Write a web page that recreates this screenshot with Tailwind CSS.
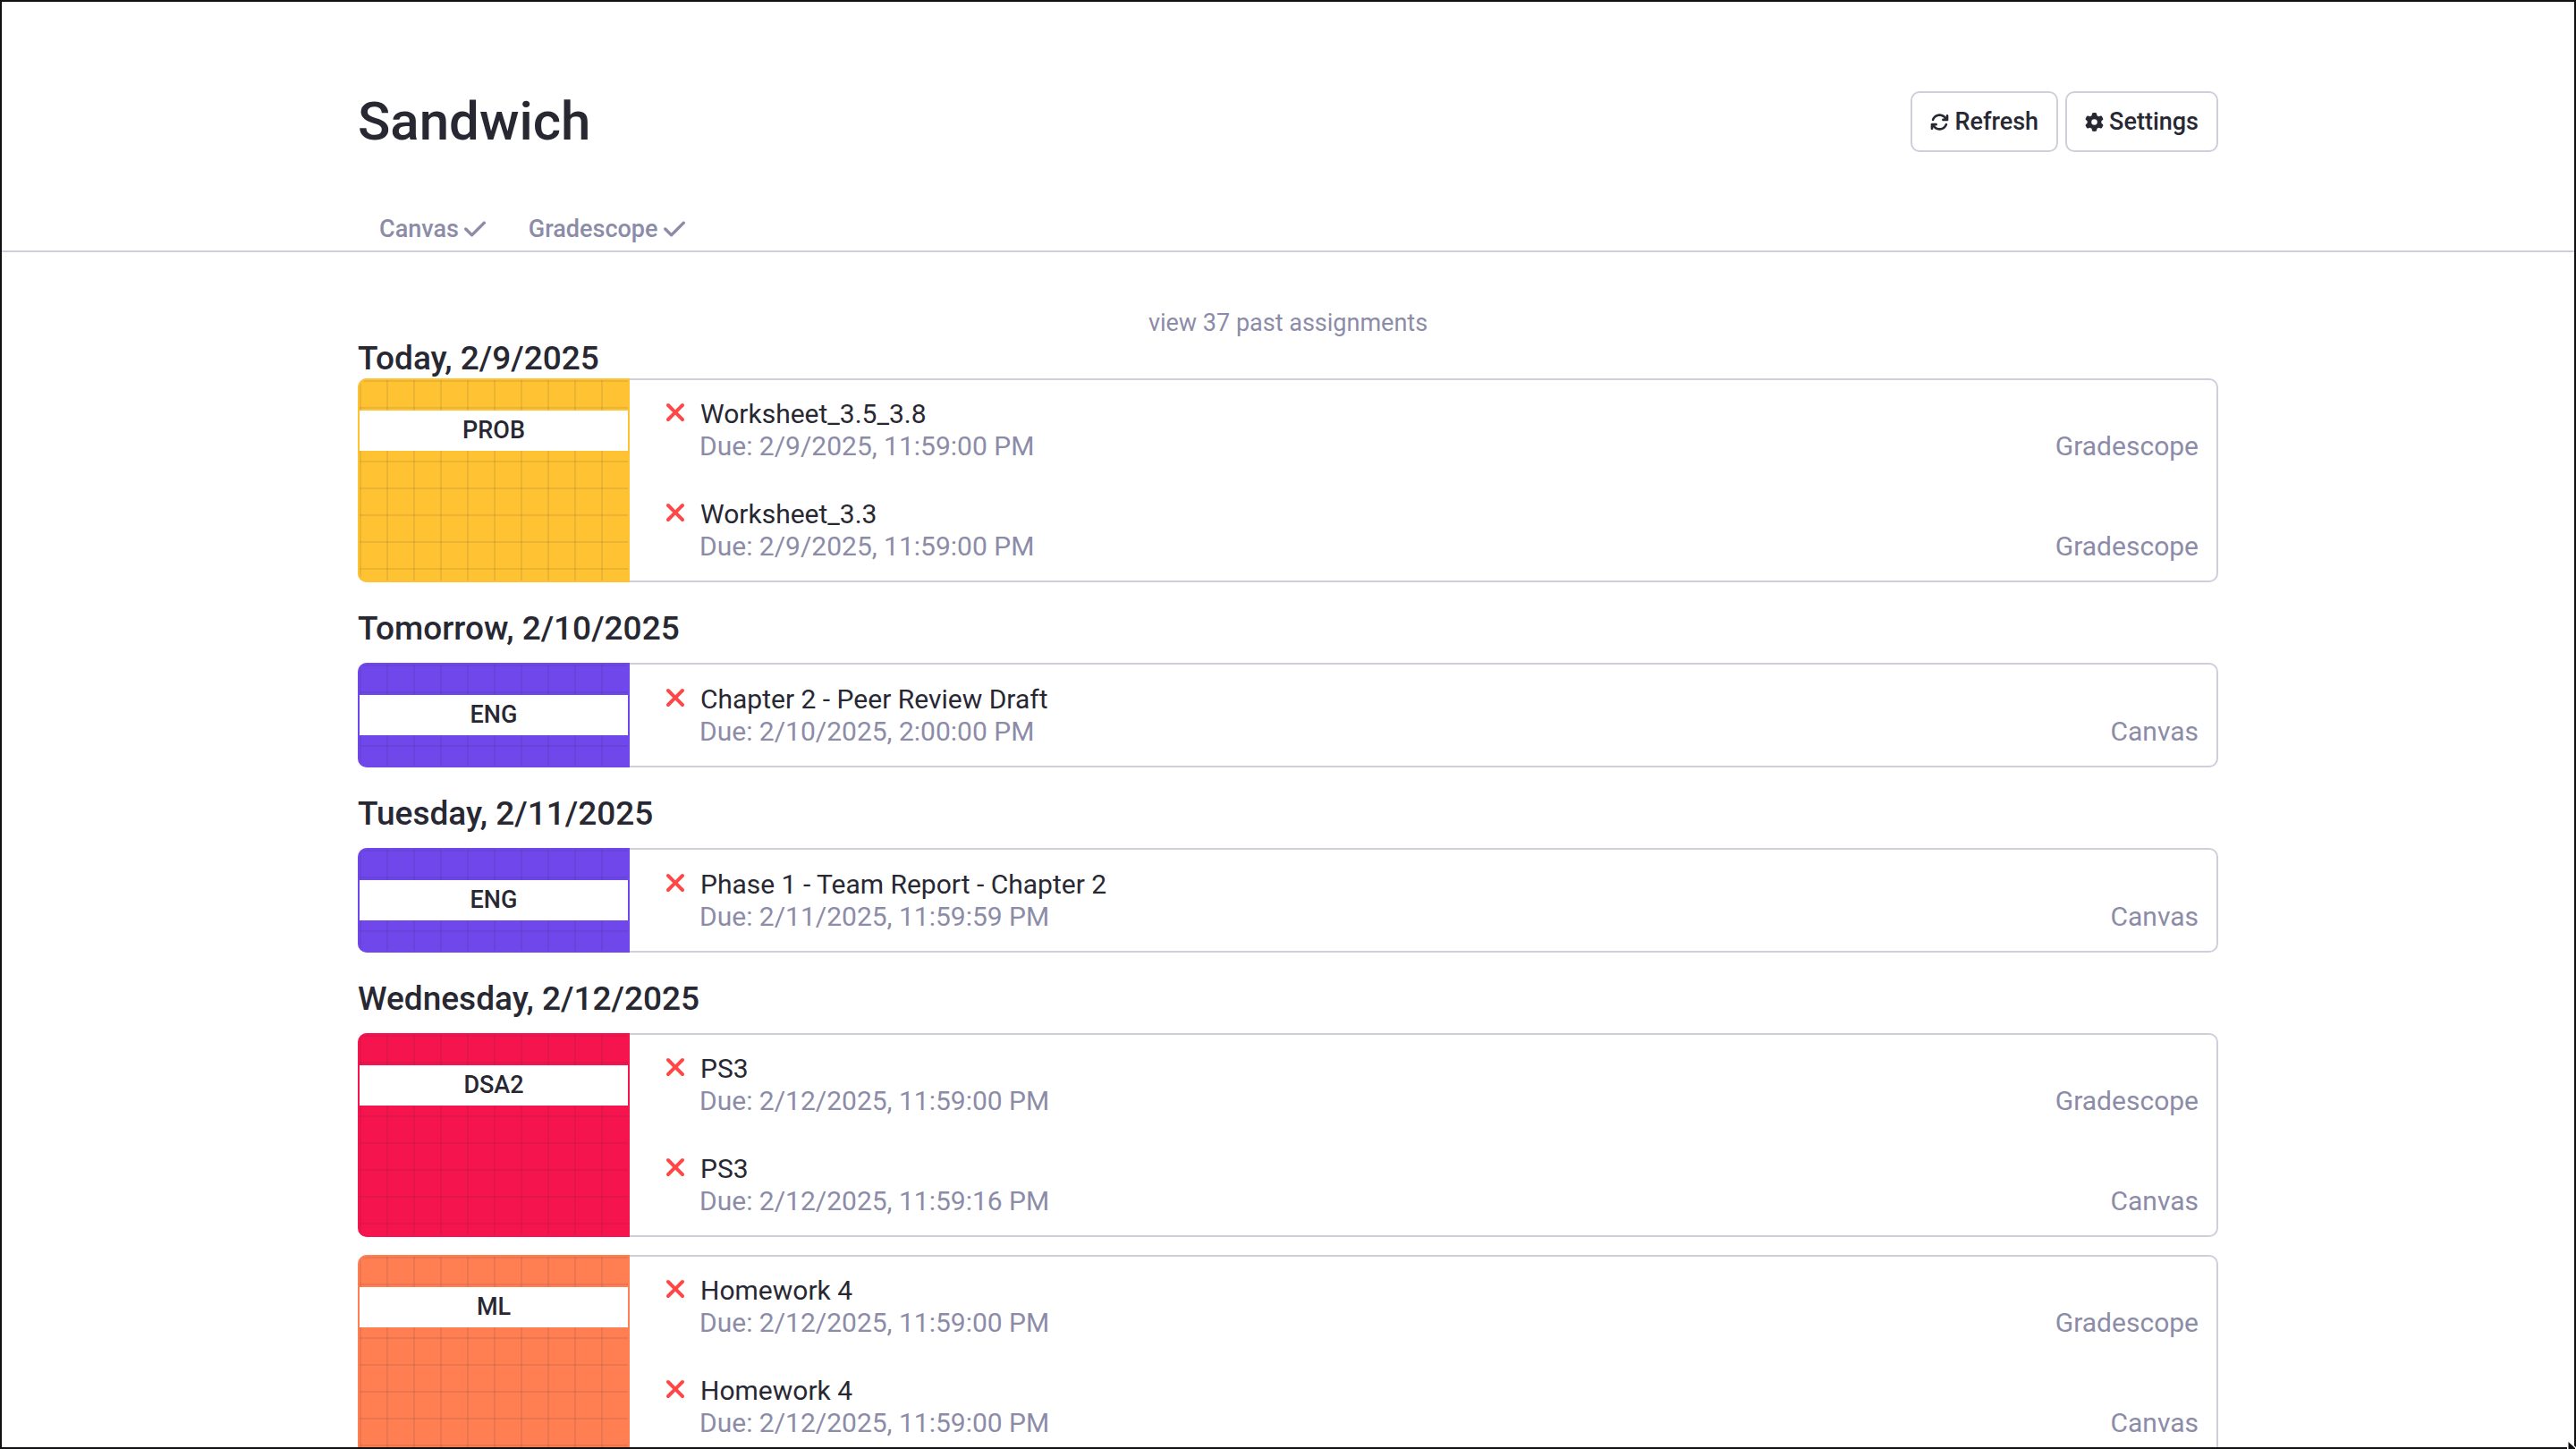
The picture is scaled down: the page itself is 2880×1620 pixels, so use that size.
<!DOCTYPE html>
<html lang="en">
<head>
<meta charset="utf-8">
<title>Sandwich</title>
<script src="https://cdn.jsdelivr.net/npm/@tailwindcss/browser@4"></script>
</head>
<body class="bg-white font-['Roboto',sans-serif] text-[#282833]">
<svg class="hidden" aria-hidden="true">
  <symbol id="x" viewBox="0 0 384 512"><path d="M342.6 150.6c12.5-12.5 12.5-32.8 0-45.3s-32.8-12.5-45.3 0L192 210.7 86.6 105.4c-12.5-12.5-32.8-12.5-45.3 0s-12.5 32.8 0 45.3L146.7 256 41.4 361.4c-12.5 12.5-12.5 32.8 0 45.3s32.8 12.5 45.3 0L192 301.3 297.4 406.6c12.5 12.5 32.8 12.5 45.3 0s12.5-32.8 0-45.3L237.3 256 342.6 150.6z"/></symbol>
  <symbol id="check" viewBox="0 0 448 512"><path d="M438.6 105.4c12.5 12.5 12.5 32.8 0 45.3l-256 256c-12.5 12.5-32.8 12.5-45.3 0l-128-128c-12.5-12.5-12.5-32.8 0-45.3s32.8-12.5 45.3 0L160 338.7 393.4 105.4c12.5-12.5 32.8-12.5 45.3 0z"/></symbol>
  <symbol id="rotate" viewBox="0 0 512 512"><path d="M105.1 202.6c7.7-21.8 20.2-42.3 37.8-59.8c62.5-62.5 163.8-62.5 226.3 0L386.3 160 352 160c-17.7 0-32 14.3-32 32s14.3 32 32 32l111.5 0 .4 0c17.7 0 32-14.3 32-32l0-112c0-17.7-14.3-32-32-32s-32 14.3-32 32l0 35.2L414.4 97.6c-87.5-87.5-229.3-87.5-316.8 0C73.2 122 55.6 150.7 44.8 181.4c-5.9 16.7 2.9 34.9 19.5 40.8s34.9-2.9 40.8-19.5zM39 289.3c-5 1.5-9.8 4.2-13.7 8.2c-4 4-6.7 8.8-8.1 14c-.3 1.2-.6 2.5-.8 3.8c-.3 1.7-.4 3.4-.4 5.1L16 432c0 17.7 14.3 32 32 32s32-14.3 32-32l0-35.1 17.6 17.5c87.5 87.4 229.3 87.4 316.7 0c24.4-24.4 42.1-53.1 52.9-83.8c5.9-16.7-2.9-34.9-19.5-40.8s-34.9 2.9-40.8 19.5c-7.7 21.8-20.2 42.3-37.8 59.8c-62.5 62.5-163.8 62.5-226.3 0l-.1-.1L125.6 352l34.4 0c17.7 0 32-14.3 32-32s-14.3-32-32-32L48.4 288c-1.6 0-3.2 .1-4.8 .3s-3.1 .5-4.6 1z"/></symbol>
  <symbol id="gear" viewBox="0 0 512 512"><path d="M495.9 166.6c3.2 8.7 .5 18.4-6.4 24.6l-43.3 39.4c1.1 8.3 1.7 16.8 1.7 25.4s-.6 17.1-1.7 25.4l43.3 39.4c6.9 6.2 9.6 15.9 6.4 24.6c-4.4 11.9-9.7 23.3-15.8 34.3l-4.7 8.1c-6.6 11-14 21.4-22.1 31.2c-5.9 7.2-15.7 9.6-24.5 6.8l-55.7-17.7c-13.4 10.3-28.2 18.9-44 25.4l-12.5 57.1c-2 9.1-9 16.3-18.2 17.8c-13.8 2.3-28 3.5-42.5 3.5s-28.7-1.2-42.5-3.5c-9.2-1.5-16.2-8.7-18.2-17.8l-12.5-57.1c-15.8-6.5-30.6-15.1-44-25.4L83.1 425.9c-8.8 2.8-18.6 .3-24.5-6.8c-8.1-9.8-15.5-20.2-22.1-31.2l-4.7-8.1c-6.1-11-11.4-22.4-15.8-34.3c-3.2-8.7-.5-18.4 6.4-24.6l43.3-39.4C64.6 273.1 64 264.6 64 256s.6-17.1 1.7-25.4L22.4 191.2c-6.9-6.2-9.6-15.9-6.4-24.6c4.4-11.9 9.7-23.3 15.8-34.3l4.7-8.1c6.6-11 14-21.4 22.1-31.2c5.9-7.2 15.7-9.6 24.5-6.8l55.7 17.7c13.4-10.3 28.2-18.9 44-25.4l12.5-57.1c2-9.1 9-16.3 18.2-17.8C227.3 1.2 241.5 0 256 0s28.7 1.2 42.5 3.5c9.2 1.5 16.2 8.7 18.2 17.8l12.5 57.1c15.8 6.5 30.6 15.1 44 25.4l55.7-17.7c8.8-2.8 18.6-.3 24.5 6.8c8.1 9.8 15.5 20.2 22.1 31.2l4.7 8.1c6.1 11 11.4 22.4 15.8 34.3zM256 336a80 80 0 1 0 0-160 80 80 0 1 0 0 160z"/></symbol>
</svg>

<div class="relative h-screen overflow-hidden border-2 border-[#111013]">
  <header class="border-b-2 border-[#d1cedc] pt-[98px]">
    <div class="mx-auto max-w-[2080px]">
      <div class="flex items-center justify-between">
        <h1 class="text-[60px] leading-[72px] font-medium">Sandwich</h1>
        <div class="flex gap-2">
          <button class="flex h-[68px] items-center gap-1.5 rounded-[10px] border-2 border-[#d1cedc] px-5 text-[27px] leading-8 font-medium"><svg class="size-[21px] fill-current"><use href="#rotate"/></svg>Refresh</button>
          <button class="flex h-[68px] items-center gap-1.5 rounded-[10px] border-2 border-[#d1cedc] px-5 text-[27px] leading-8 font-medium"><svg class="size-[21px] fill-current"><use href="#gear"/></svg>Settings</button>
        </div>
      </div>
      <nav class="mt-[66px] flex text-[27px] leading-9 font-medium text-[#8c8ca8]">
        <button class="flex items-center gap-1.5 px-6 pb-1.5"><span>Canvas</span><svg class="h-7 w-6 fill-current"><use href="#check"/></svg></button>
        <button class="flex items-center gap-1.5 px-6 pb-1.5"><span>Gradescope</span><svg class="h-7 w-6 fill-current"><use href="#check"/></svg></button>
      </nav>
    </div>
  </header>

  <main class="mx-auto max-w-[2080px] pt-[62px]">
    <div class="text-center"><button class="block mx-auto text-[27px] leading-[35px] text-[#8c8ca8]">view 37 past assignments</button></div>

    <section>
      <h2 class="text-[37px] leading-[44px] font-medium">Today, 2/9/2025</h2>
      <article class="flex rounded-[10px] border-2 border-[#d1cedc]">
        <div class="-my-0.5 -ml-0.5 w-[304px] shrink-0 rounded-l-[10px] border-2 border-[#ffc233] bg-[#ffc233] bg-[linear-gradient(#28283318_2px,transparent_2px),linear-gradient(90deg,#28283318_2px,transparent_2px)] bg-size-[30px_30px] py-[34px]">
          <h3 class="bg-white text-center text-[27px] leading-[45px] font-medium">PROB</h3>
        </div>
        <ul class="flex grow flex-col justify-center text-[30px] leading-9">
          <li class="flex py-5 pr-5 pl-[39px]"><svg class="mr-[15px] h-8 w-6 fill-[#ff4747]"><use href="#x"/></svg>
            <div class="grow"><div class="pl-px">Worksheet_3.5_3.8</div><div class="flex justify-between text-[#8c8ca8]"><span>Due: 2/9/2025, 11:59:00 PM</span><span>Gradescope</span></div></div></li>
          <li class="flex py-5 pr-5 pl-[39px]"><svg class="mr-[15px] h-8 w-6 fill-[#ff4747]"><use href="#x"/></svg>
            <div class="grow"><div class="pl-px">Worksheet_3.3</div><div class="flex justify-between text-[#8c8ca8]"><span>Due: 2/9/2025, 11:59:00 PM</span><span>Gradescope</span></div></div></li>
        </ul>
      </article>
    </section>

    <section class="mt-[30px]">
      <h2 class="mb-4 text-[37px] leading-[44px] font-medium">Tomorrow, 2/10/2025</h2>
      <article class="flex rounded-[10px] border-2 border-[#d1cedc]">
        <div class="-my-0.5 -ml-0.5 w-[304px] shrink-0 rounded-l-[10px] border-2 border-[#7047eb] bg-[#7047eb] bg-[linear-gradient(#28283318_2px,transparent_2px),linear-gradient(90deg,#28283318_2px,transparent_2px)] bg-size-[30px_30px] py-[34px]">
          <h3 class="bg-white text-center text-[27px] leading-[45px] font-medium">ENG</h3>
        </div>
        <ul class="flex grow flex-col justify-center text-[30px] leading-9">
          <li class="flex py-5 pr-5 pl-[39px]"><svg class="mr-[15px] h-8 w-6 fill-[#ff4747]"><use href="#x"/></svg>
            <div class="grow"><div class="pl-px">Chapter 2 - Peer Review Draft</div><div class="flex justify-between text-[#8c8ca8]"><span>Due: 2/10/2025, 2:00:00 PM</span><span>Canvas</span></div></div></li>
        </ul>
      </article>
    </section>

    <section class="mt-[30px]">
      <h2 class="mb-4 text-[37px] leading-[44px] font-medium">Tuesday, 2/11/2025</h2>
      <article class="flex rounded-[10px] border-2 border-[#d1cedc]">
        <div class="-my-0.5 -ml-0.5 w-[304px] shrink-0 rounded-l-[10px] border-2 border-[#7047eb] bg-[#7047eb] bg-[linear-gradient(#28283318_2px,transparent_2px),linear-gradient(90deg,#28283318_2px,transparent_2px)] bg-size-[30px_30px] py-[34px]">
          <h3 class="bg-white text-center text-[27px] leading-[45px] font-medium">ENG</h3>
        </div>
        <ul class="flex grow flex-col justify-center text-[30px] leading-9">
          <li class="flex py-5 pr-5 pl-[39px]"><svg class="mr-[15px] h-8 w-6 fill-[#ff4747]"><use href="#x"/></svg>
            <div class="grow"><div class="pl-px">Phase 1 - Team Report - Chapter 2</div><div class="flex justify-between text-[#8c8ca8]"><span>Due: 2/11/2025, 11:59:59 PM</span><span>Canvas</span></div></div></li>
        </ul>
      </article>
    </section>

    <section class="mt-[30px]">
      <h2 class="mb-4 text-[37px] leading-[44px] font-medium">Wednesday, 2/12/2025</h2>
      <article class="flex rounded-[10px] border-2 border-[#d1cedc]">
        <div class="-my-0.5 -ml-0.5 w-[304px] shrink-0 rounded-l-[10px] border-2 border-[#f5144d] bg-[#f5144d] bg-[linear-gradient(#28283318_2px,transparent_2px),linear-gradient(90deg,#28283318_2px,transparent_2px)] bg-size-[30px_30px] py-[34px]">
          <h3 class="bg-white text-center text-[27px] leading-[45px] font-medium">DSA2</h3>
        </div>
        <ul class="flex grow flex-col justify-center text-[30px] leading-9">
          <li class="flex py-5 pr-5 pl-[39px]"><svg class="mr-[15px] h-8 w-6 fill-[#ff4747]"><use href="#x"/></svg>
            <div class="grow"><div class="pl-px">PS3</div><div class="flex justify-between text-[#8c8ca8]"><span>Due: 2/12/2025, 11:59:00 PM</span><span>Gradescope</span></div></div></li>
          <li class="flex py-5 pr-5 pl-[39px]"><svg class="mr-[15px] h-8 w-6 fill-[#ff4747]"><use href="#x"/></svg>
            <div class="grow"><div class="pl-px">PS3</div><div class="flex justify-between text-[#8c8ca8]"><span>Due: 2/12/2025, 11:59:16 PM</span><span>Canvas</span></div></div></li>
        </ul>
      </article>
      <article class="mt-5 flex rounded-[10px] border-2 border-[#d1cedc]">
        <div class="-my-0.5 -ml-0.5 w-[304px] shrink-0 rounded-l-[10px] border-2 border-[#ff7f53] bg-[#ff7f53] bg-[linear-gradient(#28283318_2px,transparent_2px),linear-gradient(90deg,#28283318_2px,transparent_2px)] bg-size-[30px_30px] py-[34px]">
          <h3 class="bg-white text-center text-[27px] leading-[45px] font-medium">ML</h3>
        </div>
        <ul class="flex grow flex-col justify-center text-[30px] leading-9">
          <li class="flex py-5 pr-5 pl-[39px]"><svg class="mr-[15px] h-8 w-6 fill-[#ff4747]"><use href="#x"/></svg>
            <div class="grow"><div class="pl-px">Homework 4</div><div class="flex justify-between text-[#8c8ca8]"><span>Due: 2/12/2025, 11:59:00 PM</span><span>Gradescope</span></div></div></li>
          <li class="flex py-5 pr-5 pl-[39px]"><svg class="mr-[15px] h-8 w-6 fill-[#ff4747]"><use href="#x"/></svg>
            <div class="grow"><div class="pl-px">Homework 4</div><div class="flex justify-between text-[#8c8ca8]"><span>Due: 2/12/2025, 11:59:00 PM</span><span>Canvas</span></div></div></li>
        </ul>
      </article>
    </section>
  </main>
</div>
<!-- mouse pointer -->
<svg class="pointer-events-none fixed right-0 bottom-0 h-2.5 w-2.5" viewBox="0 0 10 10" aria-hidden="true"><path d="M0 0L1 0L10 8V10H0z" fill="#fff"/><path d="M1.5 2L9 9V10H1.5z" fill="#111013"/></svg>
</body>
</html>
